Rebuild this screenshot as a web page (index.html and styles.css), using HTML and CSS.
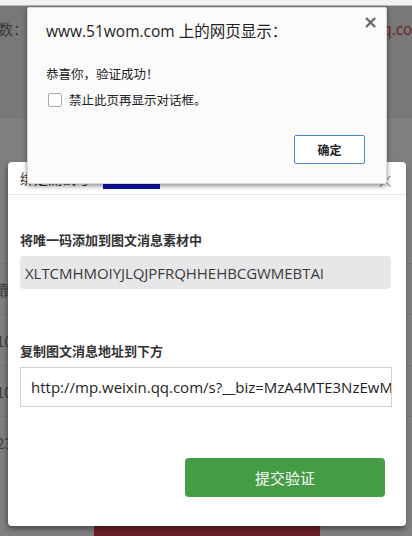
FILE: index.html
```html
<!DOCTYPE html>
<html lang="zh-CN">
<head>
<meta charset="utf-8">
<link rel="stylesheet" href="styles.css">
</head>
<body>
<div class="page">
  <div class="chrome"></div>
  <div class="top">
    <span class="top-left">数：1</span>
    <span class="top-right">q.com</span>
  </div>
  <div class="rows">
    <div class="row"><span>靠</span></div>
    <div class="row"><span>10</span></div>
    <div class="row"><span>10</span></div>
    <div class="row"><span>23</span></div>
  </div>
  <div class="redbar"></div>
</div>

<div class="modal">
  <div class="modal-head">
    <span class="modal-title">绑定测试号<span class="sel">ad0f8e8</span></span>
    <span class="modal-x">×</span>
  </div>
  <div class="modal-body">
    <div class="label">将唯一码添加到图文消息素材中</div>
    <div class="code">XLTCMHMOIYJLQJPFRQHHEHBCGWMEBTAI</div>
    <div class="label label2">复制图文消息地址到下方</div>
    <div class="input">http://mp.weixin.qq.com/s?__biz=MzA4MTE3NzEwMA==&amp;mid=2650</div>
    <div class="actions"><button class="submit">提交验证</button></div>
  </div>
</div>

<div class="alert">
  <div class="alert-title">www.51wom.com 上的网页显示：</div>
  <span class="alert-x">×</span>
  <div class="alert-msg">恭喜你，验证成功！</div>
  <label class="alert-check"><span class="box"></span>禁止此页再显示对话框。</label>
  <div class="alert-actions"><button class="ok">确定</button></div>
</div>
</body>
</html>
```
FILE: styles.css
```css
html, body {
  margin: 0;
  padding: 0;
}
body {
  width: 412px;
  height: 536px;
  overflow: hidden;
  position: relative;
  background: #7f7f7f;
  font-family: "Noto Sans CJK SC", "Noto Sans", sans-serif;
}
.page {
  display: flex;
  flex-direction: column;
  height: 536px;
}
.chrome {
  height: 5px;
  background: #f2f2f2;
  border-bottom: 1px solid #b8b8b8;
}
.top {
  height: 112px;
  background: #787878;
  display: flex;
  justify-content: space-between;
  align-items: flex-start;
  padding-top: 12px;
  box-sizing: border-box;
  border-bottom: 1px solid #727272;
  font-size: 15px;
}
.top-left {
  color: #3a3a3a;
  margin-left: -2px;
}
.top-right {
  color: #6b2a2a;
  margin-right: -14px;
}
.rows {
  margin-top: 145px;
  display: flex;
  flex-direction: column;
}
.row {
  height: 50px;
  border-top: 1px solid #747474;
  display: flex;
  align-items: center;
  font-size: 15px;
  color: #3d3d3d;
  margin-left: -4px;
}
.redbar {
  margin-top: auto;
  margin-left: 94px;
  width: 226px;
  height: 11px;
  background: #6b2028;
}

/* modal */
.modal {
  position: absolute;
  left: 8px;
  top: 162px;
  width: 398px;
  height: 364px;
  background: #fff;
  border-radius: 4px;
  box-shadow: -1px 3px 5px rgba(0,0,0,0.4);
  display: flex;
  flex-direction: column;
}
.modal-head {
  height: 32px;
  border-bottom: 1px solid #e5e5e5;
  display: flex;
  align-items: center;
  justify-content: space-between;
  padding: 0 12px 0 12px;
  font-size: 14px;
  color: #333;
}
.modal-title {
  display: flex;
  align-items: center;
}
.modal-title .sel {
  margin-left: 13px;
  display: inline-block;
  width: 57px;
  height: 14px;
  overflow: hidden;
  background: #1010b0;
  color: #1010b0;
  font-size: 12px;
  line-height: 14px;
  margin-top: 8px;
}
.modal-x {
  color: #999;
  font-size: 18px;
  margin-top: 3px;
}
.modal-body {
  padding: 0 12px;
  display: flex;
  flex-direction: column;
}
.label {
  margin-top: 36px;
  font-size: 13px;
  font-weight: bold;
  color: #333;
  line-height: 18px;
}
.code {
  margin-top: 7px;
  height: 33px;
  background: #e7e7ea;
  border-radius: 4px;
  display: flex;
  align-items: center;
  padding-left: 5px;
  font-family: "Open Sans", "Noto Sans", sans-serif;
  font-size: 15px;
  color: #3a3a3a;
  letter-spacing: -0.05px;
  margin-right: 3px;
}
.label2 {
  margin-top: 53px;
}
.input {
  margin-top: 7px;
  width: 372px;
  height: 40px;
  box-sizing: border-box;
  border: 1px solid #d0d0d0;
  padding-left: 10px;
  display: flex;
  align-items: center;
  white-space: nowrap;
  overflow: hidden;
  font-family: "Open Sans", "Noto Sans", sans-serif;
  font-size: 15px;
  color: #222;
}
.actions {
  margin-top: 51px;
  display: flex;
  justify-content: flex-end;
  padding-right: 9px;
}
.submit {
  width: 200px;
  height: 39px;
  border: none;
  border-radius: 4px;
  background: #449d44;
  color: #fff;
  font-family: "Noto Sans CJK SC", sans-serif;
  font-size: 15px;
}

/* alert */
.alert {
  position: absolute;
  left: 27px;
  top: 7px;
  width: 360px;
  height: 177px;
  box-sizing: border-box;
  background: #fbfbfb;
  border: 1px solid #d8d8d8;
  border-radius: 2px;
  box-shadow: 0 2px 5px rgba(0,0,0,0.45);
  padding: 10px 0 0 18px;
}
.alert-title {
  font-size: 15.5px;
  color: #222;
  line-height: 26px;
  font-family: "Open Sans", "Noto Sans CJK SC", sans-serif;
}
.alert-x {
  position: absolute;
  right: 8px;
  top: 3px;
  font-size: 18px;
  font-weight: bold;
  color: #666;
  font-family: "DejaVu Sans", sans-serif;
}
.alert-msg {
  margin-top: 22px;
  font-size: 12.5px;
  color: #222;
  line-height: 16px;
}
.alert-check {
  margin-top: 10px;
  display: flex;
  align-items: center;
  font-size: 12.5px;
  color: #222;
  line-height: 16px;
}
.box {
  width: 12px;
  height: 12px;
  border: 1px solid #aaa;
  border-radius: 2px;
  background: #fff;
  margin: 0 7px 0 2px;
}
.alert-actions {
  margin-top: 27px;
  display: flex;
  justify-content: flex-end;
  padding-right: 21px;
}
.ok {
  width: 71px;
  height: 29px;
  background: #fff;
  border: 1px solid #4d88cf;
  border-radius: 2px;
  font-family: "Noto Sans CJK SC", sans-serif;
  font-size: 12px;
  font-weight: bold;
  color: #222;
}
```
